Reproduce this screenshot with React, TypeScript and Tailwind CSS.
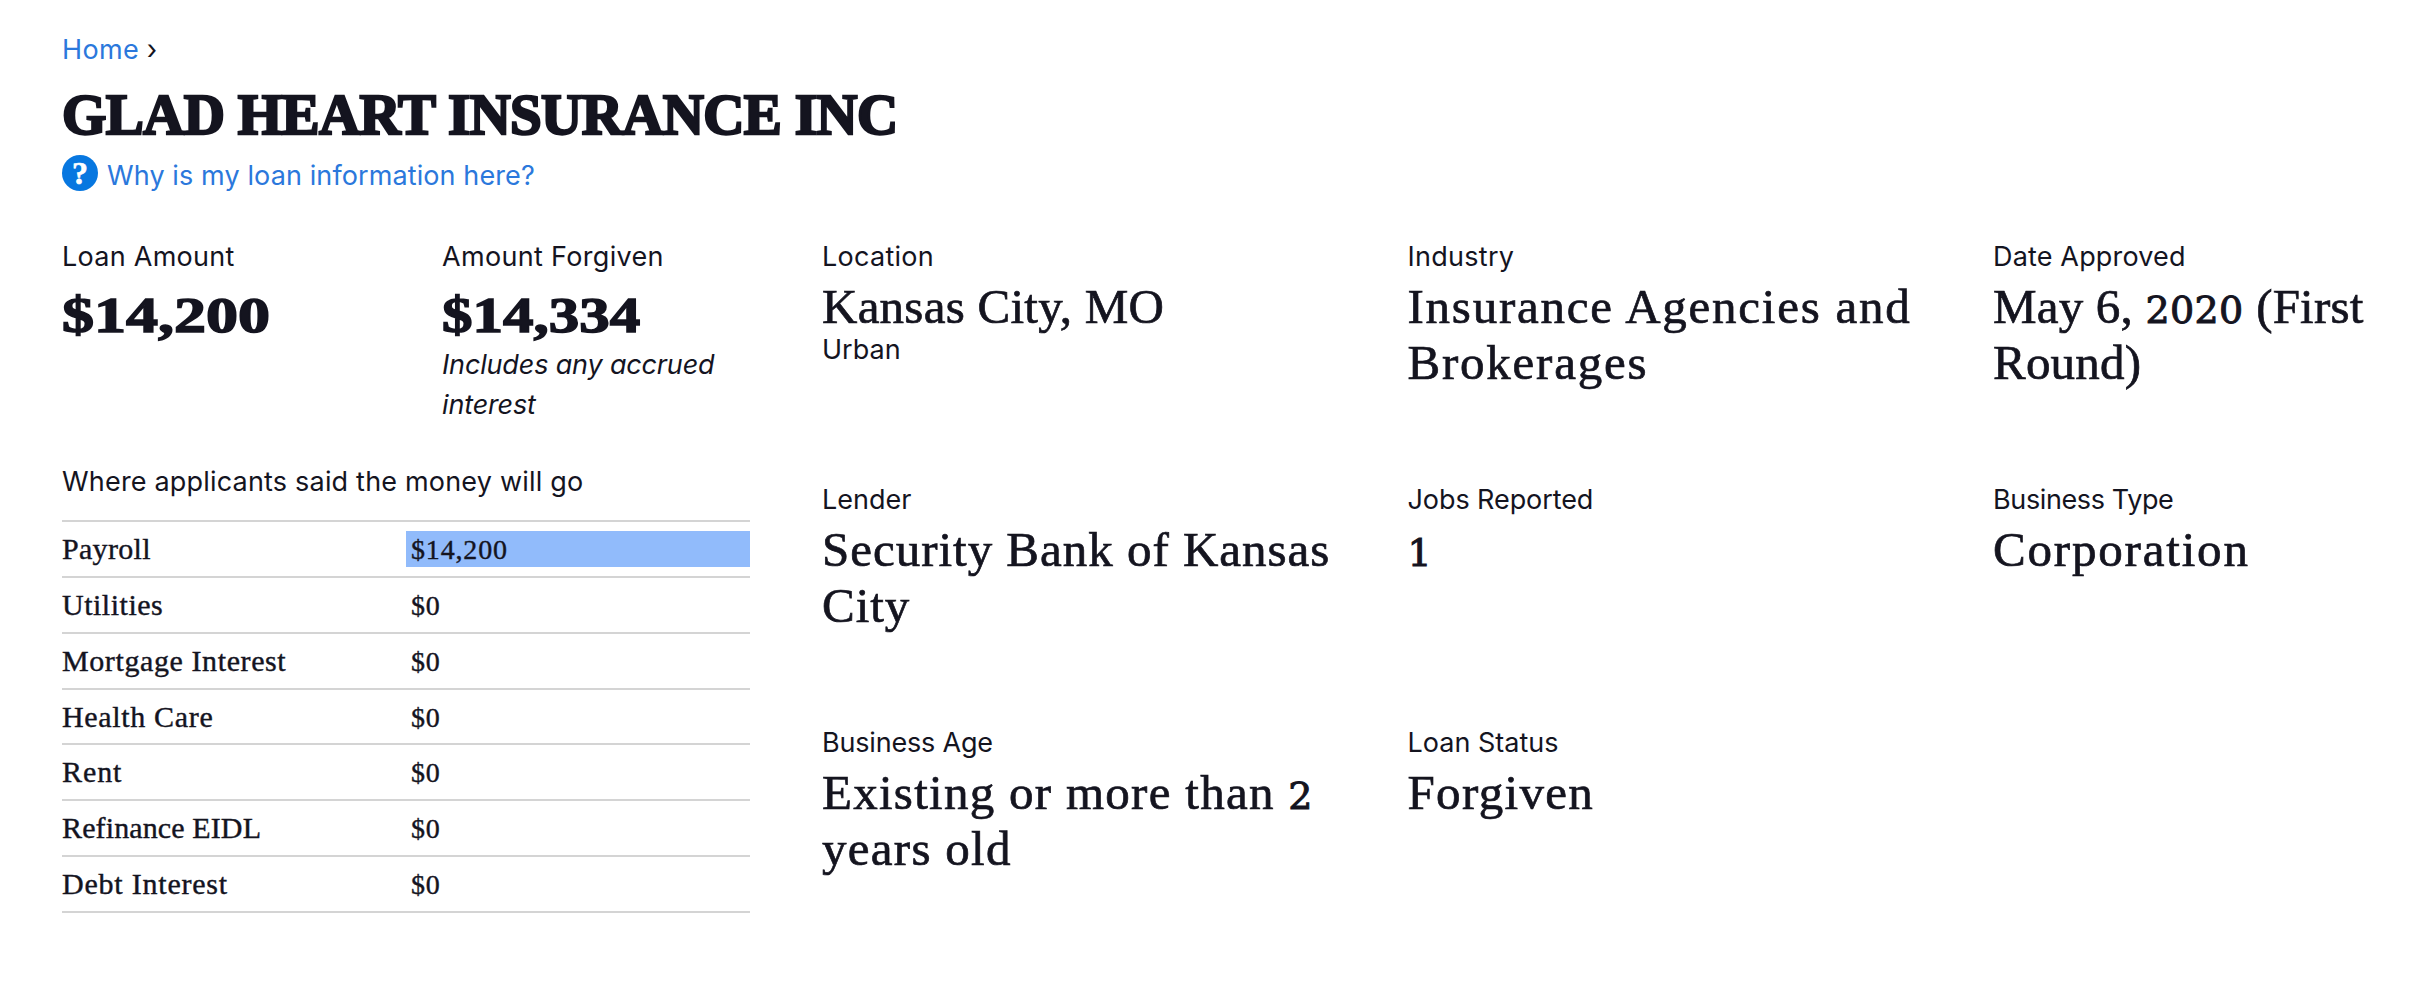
import React from 'react';

interface Fact {
  label: string;
  labelTracking: string;
  lines: string[];
  tracking: string;
  note?: string;
}

interface Use {
  name: string;
  amount: number;
  tracking: string;
}

const facts: (Fact | null)[] = [
  { label: 'Location', labelTracking: 'tracking-[0.01em]', lines: ['Kansas City, MO'], note: 'Urban', tracking: 'tracking-[0.005em]' },
  { label: 'Industry', labelTracking: 'tracking-[0.01em]', lines: ['Insurance Agencies and', 'Brokerages'], tracking: 'tracking-[0.036em]' },
  { label: 'Date Approved', labelTracking: 'tracking-[0.006em]', lines: ['May 6, 2020 (First', 'Round)'], tracking: 'tracking-[0.004em]' },
  { label: 'Lender', labelTracking: 'tracking-normal', lines: ['Security Bank of Kansas', 'City'], tracking: 'tracking-[0.02em]' },
  { label: 'Jobs Reported', labelTracking: 'tracking-[-0.003em]', lines: ['1'], tracking: 'tracking-normal' },
  { label: 'Business Type', labelTracking: 'tracking-[-0.014em]', lines: ['Corporation'], tracking: 'tracking-[0.037em]' },
  { label: 'Business Age', labelTracking: 'tracking-[-0.007em]', lines: ['Existing or more than 2', 'years old'], tracking: 'tracking-[0.026em]' },
  { label: 'Loan Status', labelTracking: 'tracking-normal', lines: ['Forgiven'], tracking: 'tracking-[0.027em]' },
  null,
];

const uses: Use[] = [
  { name: 'Payroll', amount: 14200, tracking: 'tracking-[0.01em]' },
  { name: 'Utilities', amount: 0, tracking: 'tracking-[0.017em]' },
  { name: 'Mortgage Interest', amount: 0, tracking: 'tracking-[0.02em]' },
  { name: 'Health Care', amount: 0, tracking: 'tracking-[0.022em]' },
  { name: 'Rent', amount: 0, tracking: 'tracking-[0.03em]' },
  { name: 'Refinance EIDL', amount: 0, tracking: 'tracking-[0.004em]' },
  { name: 'Debt Interest', amount: 0, tracking: 'tracking-[0.026em]' },
];

const loanAmount = 14200;
const forgiven = 14334;

const dollars = (value: number) => `$${value.toLocaleString('en-US')}`;

// 0, 1 and 2 sit at x-height, like old-style figures
const withOldStyleFigures = (text: string) =>
  text.split(/([0-2]+)/).map((part, i) =>
    /^[0-2]/.test(part) ? (
      <span key={i} className="font-['DejaVu_Serif',serif] text-[38px] leading-none tracking-[0.01em] [-webkit-text-stroke:1px_#14141f]">{part}</span>
    ) : part
  );

const Amount: React.FC<{ value: number; scale: string }> = ({ value, scale }) => (
  <p className={`mt-[10px] h-14 origin-left font-['Liberation_Serif',serif] text-[50px] leading-[56px] font-bold [-webkit-text-stroke:1.5px_#14141f] ${scale}`}>
    {dollars(value)}
  </p>
);

const FactItem: React.FC<{ fact: Fact }> = ({ fact }) => (
  <div className="h-[243px] whitespace-nowrap">
    <h3 className={fact.labelTracking}>{fact.label}</h3>
    <p className={`mt-[2px] font-['Liberation_Serif',serif] text-[49px] leading-[56px] [-webkit-text-stroke:0.7px_#14141f] ${fact.tracking}`}>
      {fact.lines.map((line) => (
        <span key={line} className="block h-14">{withOldStyleFigures(line)}</span>
      ))}
    </p>
    {fact.note && <p className="-mt-[5px]">{fact.note}</p>}
  </div>
);

export default function App() {
  return (
    <main className="h-[1002px] overflow-hidden bg-white pt-[30px] pl-[62px] font-[Inter,sans-serif] text-[27px] leading-10 text-[#14141f]">
      <nav className="tracking-[0.012em]">
        <a className="text-[#2b78dc]">Home</a> ›
      </nav>

      <h1 className="mt-[13px] font-['Liberation_Serif',serif] text-[57px] leading-16 font-bold tracking-[-0.011em] [-webkit-text-stroke:2.4px_#14141f]">
        GLAD HEART INSURANCE INC
      </h1>

      <div className="mt-2 flex items-start gap-[9px] text-[#2b78dc]">
        <span className="flex size-9 items-center justify-center rounded-full bg-[#0777e0] font-['Liberation_Serif',serif] text-[32px] leading-9 font-bold text-white [-webkit-text-stroke:0.6px_white]">
          ?
        </span>
        <a className="pt-px tracking-[0.004em]">Why is my loan information here?</a>
      </div>

      <div className="mt-[41px] flex">
        <section className="w-[688px] shrink-0">
          <div className="flex h-[225px]">
            <div className="w-[380px]">
              <h3 className="tracking-[0.01em]">Loan Amount</h3>
              <Amount value={loanAmount} scale="scale-x-[1.28]" />
            </div>
            <div className="w-[308px]">
              <h3 className="tracking-[0.012em]">Amount Forgiven</h3>
              <Amount value={forgiven} scale="scale-x-[1.22]" />
              <p className="mt-[2px] tracking-[-0.006em] whitespace-nowrap italic">
                Includes any accrued
                <br />
                interest
              </p>
            </div>
          </div>

          <h3 className="mb-[18px] tracking-[0.007em]">Where applicants said the money will go</h3>
          <div className="border-b-2 border-[#d4d4d4] font-['Liberation_Serif',serif] text-[30px] leading-9 [-webkit-text-stroke:0.4px_#14141f]">
            {uses.map((use) => (
              <div key={use.name} className="flex h-[55.86px] items-center border-t-2 border-[#d4d4d4]">
                <span className={`w-1/2 ${use.tracking}`}>{use.name}</span>
                <div className="relative h-9 w-1/2">
                  <div className="absolute inset-0 bg-[#91bbfb]" style={{ width: `${(use.amount / loanAmount) * 100}%` }} />
                  <span className="relative pl-[5px] text-[28px] tracking-[0.03em]">{dollars(use.amount)}</span>
                </div>
              </div>
            ))}
          </div>
        </section>

        <section className="ml-[72px] grid shrink-0 grid-cols-[513px_513px_400px] content-start gap-x-[72.5px]">
          {facts.map((fact, i) => (fact ? <FactItem key={fact.label} fact={fact} /> : <div key={i} />))}
        </section>
      </div>
    </main>
  );
}
